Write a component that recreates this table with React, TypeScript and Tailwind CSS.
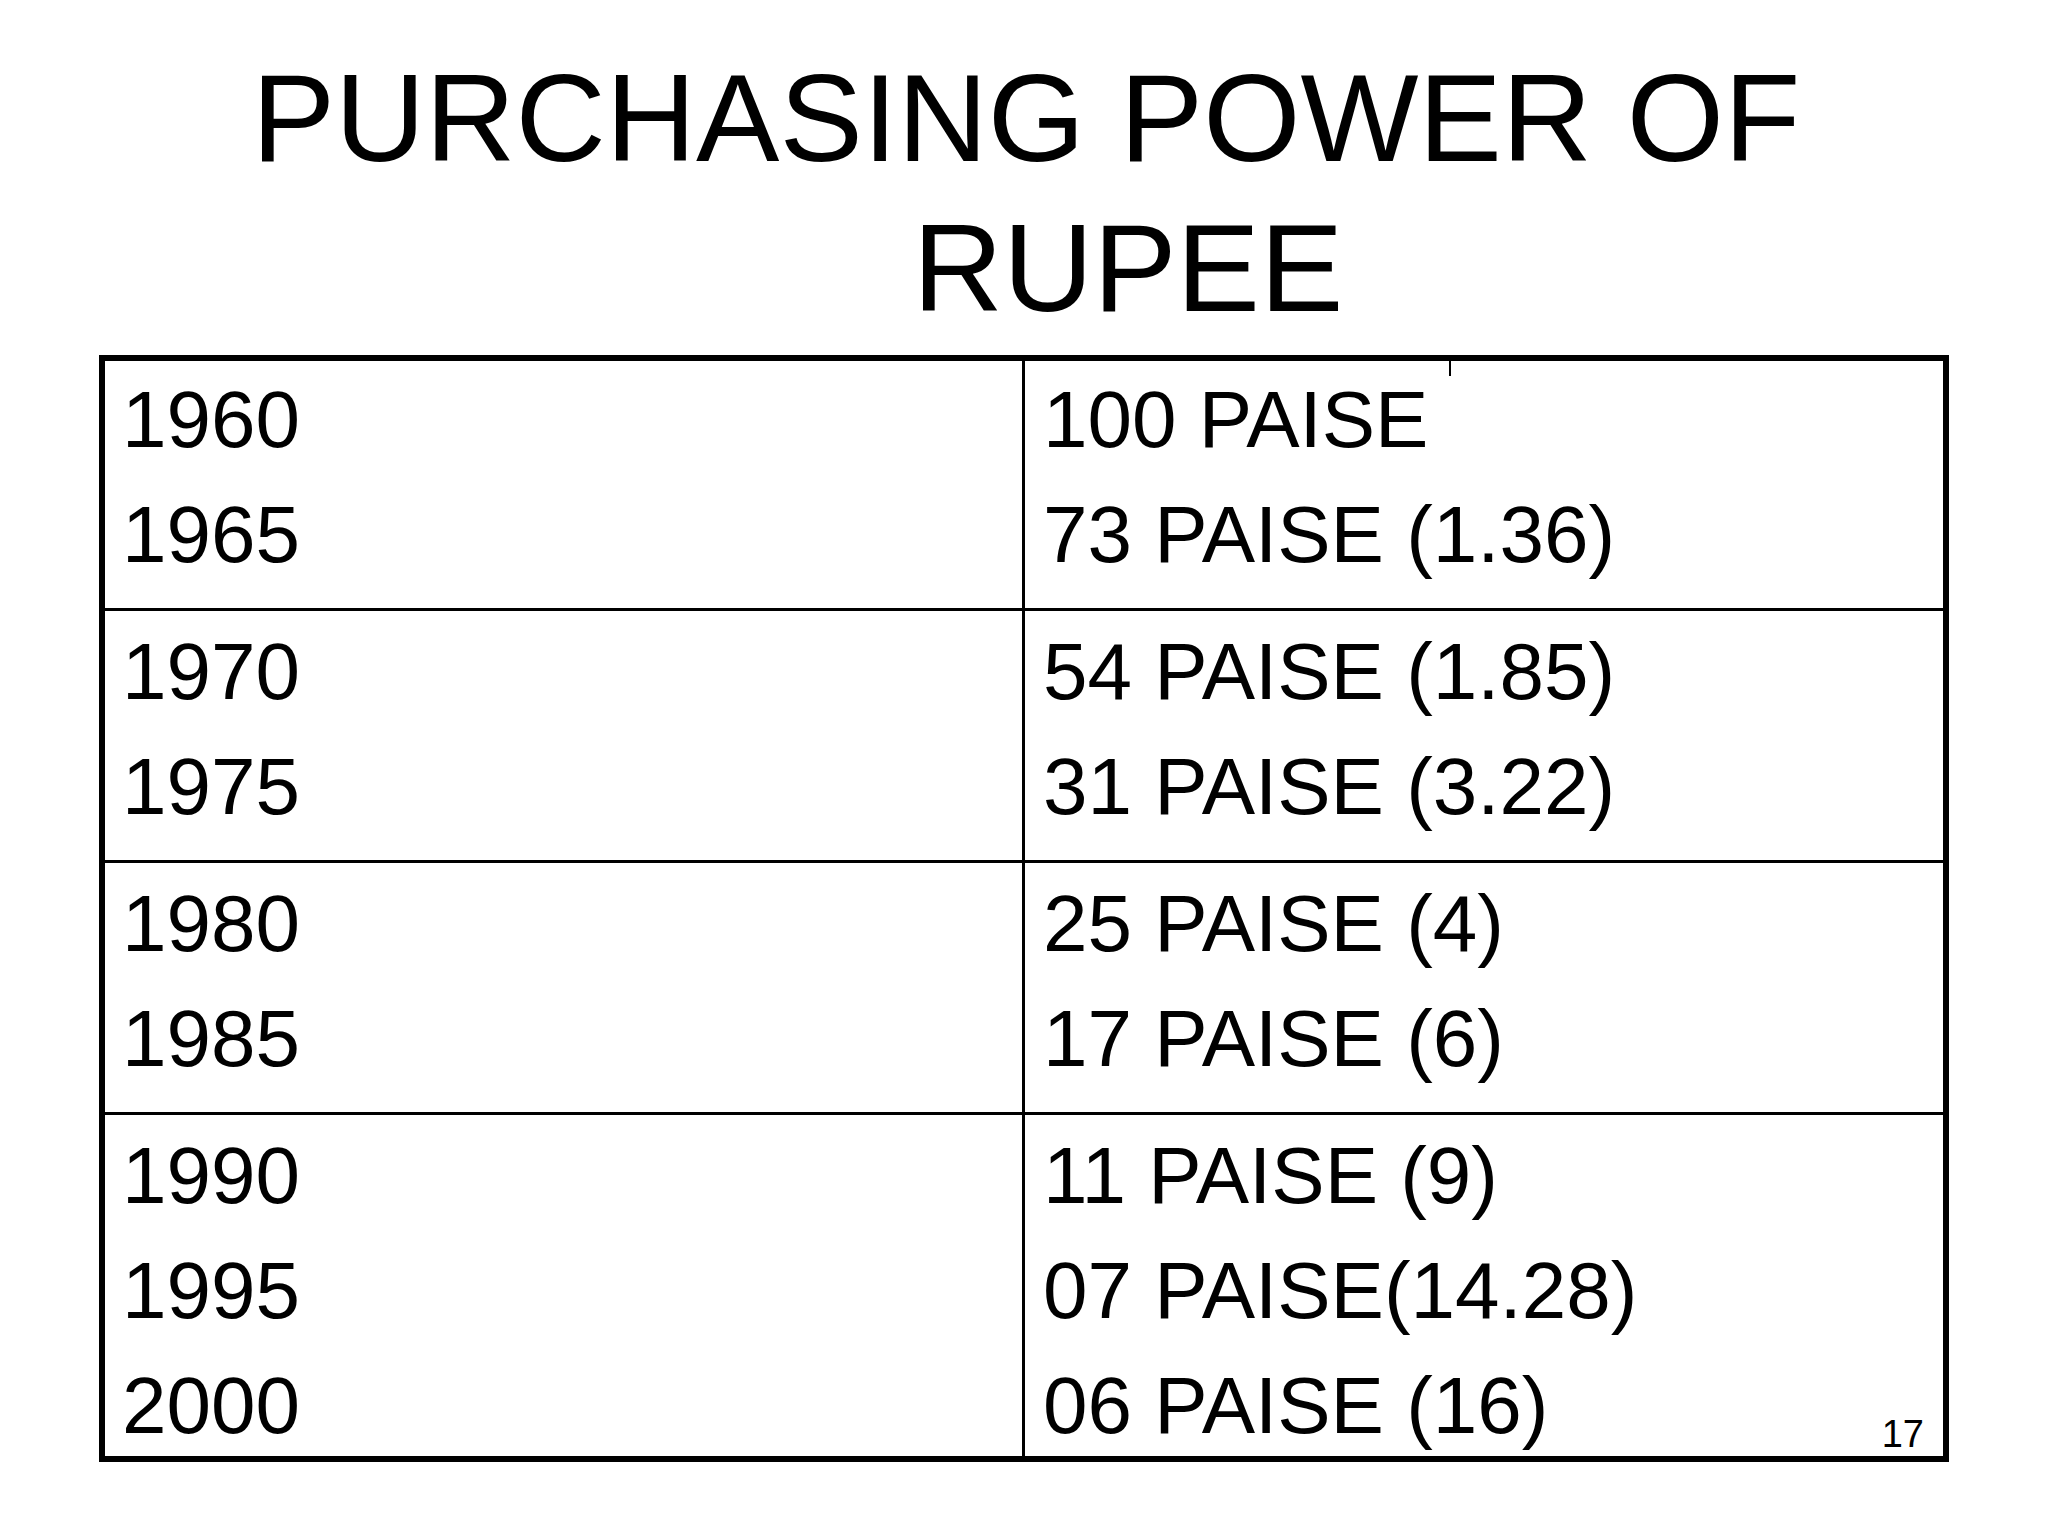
const rows = [
  { h: "h-[250px]", pt: "pt-[1px]", years: ["1960", "1965"], values: ["100 PAISE", "73 PAISE (1.36)"] },
  { h: "h-[252px]", pt: "pt-[3px]", years: ["1970", "1975"], values: ["54 PAISE (1.85)", "31 PAISE (3.22)"] },
  { h: "h-[252px]", pt: "pt-[3px]", years: ["1980", "1985"], values: ["25 PAISE (4)", "17 PAISE (6)"] },
  {
    h: "h-[341px]",
    pt: "pt-[3px]",
    years: ["1990", "1995", "2000"],
    values: ["11 PAISE (9)", "07 PAISE(14.28)", "06 PAISE (16)"],
  },
];

export default function App() {
  return (
    <div className="w-[2048px] h-[1536px] bg-white text-black font-['Liberation_Sans',Arial,sans-serif] overflow-hidden">
      {/* title */}
      <div className="pt-[43px] text-[125px] leading-[150px]">
        <div className="text-center pl-[4px]">PURCHASING POWER OF</div>
        <div className="text-center pl-[208px]">RUPEE</div>
      </div>

      {/* table */}
      <div className="relative mt-3 ml-[99px] w-[1850px] border-[6px] border-black">
        {rows.map((row, i) => (
          <div
            key={i}
            className={`flex ${row.h} ${i < rows.length - 1 ? "border-b-[3px] border-black" : ""}`}
          >
            <div className={`w-[920px] shrink-0 border-r-[3px] border-black pl-[17px] ${row.pt}`}>
              {row.years.map((y) => (
                <div key={y} className="text-[80px] leading-[115px]">
                  {y}
                </div>
              ))}
            </div>
            <div className={`flex-1 pl-[18px] ${row.pt}`}>
              {row.values.map((v) => (
                <div key={v} className="text-[80px] leading-[115px] whitespace-nowrap">
                  {v}
                </div>
              ))}
            </div>
          </div>
        ))}

        {/* stray tick under the top border */}
        <div className="absolute top-0 left-[1344px] w-[2px] h-[15px] bg-black" />

        {/* slide number */}
        <div className="absolute right-[19px] bottom-[3px] text-[38px] leading-[38px]">17</div>
      </div>
    </div>
  );
}
